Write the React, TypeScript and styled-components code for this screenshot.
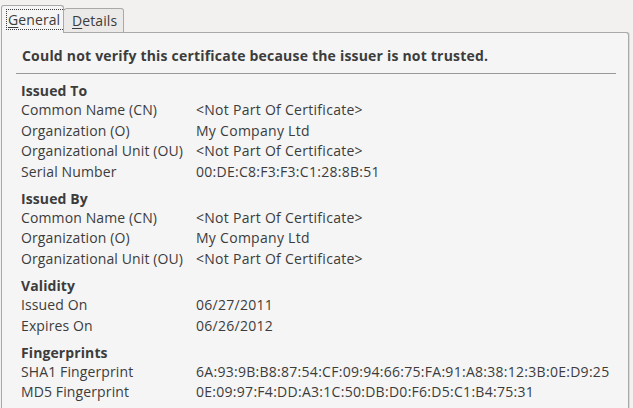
import React from "react";
import styled, { createGlobalStyle } from "styled-components";

const Global = createGlobalStyle`
  html, body { margin: 0; padding: 0; }
  body {
    background: #f2f1f0;
    font-family: "Open Sans", "Noto Sans", sans-serif;
    font-size: 14px;
    color: #3c3c3c;
    width: 633px;
    height: 408px;
    overflow: hidden;
  }
`;

const Window = styled.div`
  display: flex;
  flex-direction: column;
  height: 408px;
  padding: 5px 4px 0 1px;
  box-sizing: border-box;
`;

const TabBar = styled.div`
  display: flex;
  align-items: flex-end;
  position: relative;
  z-index: 1;
  margin-bottom: -1px;
`;

const Tab = styled.div<{ $active?: boolean }>`
  box-sizing: border-box;
  height: ${(p) => (p.$active ? 28 : 25)}px;
  width: ${(p) => (p.$active ? 63 : 60)}px;
  border: 1px solid #a9a9a9;
  border-bottom: ${(p) => (p.$active ? "none" : "1px solid #a9a9a9")};
  border-left: ${(p) => (p.$active ? "1px solid #a9a9a9" : "none")};
  border-radius: 3px 3px 0 0;
  background: ${(p) => (p.$active ? "#f5f5f5" : "#ebeae8")};
  display: flex;
  align-items: flex-start;
  padding: ${(p) => (p.$active ? "3px 0 0 4px" : "1px 0 0 6px")};
  font-size: 14px;
  line-height: 19px;
  letter-spacing: 0.1px;
`;

const FocusLabel = styled.span<{ $focused?: boolean }>`
  display: inline-block;
  padding: 0 4px 0 1px;
  height: 21px;
  box-sizing: border-box;
  line-height: 19px;
  border: 1px dotted ${(p) => (p.$focused ? "#3c3c3c" : "transparent")};
  u {
    text-decoration: underline;
    text-underline-offset: 2px;
  }
`;

const Panel = styled.div`
  flex: 1;
  background: #f5f5f5;
  border: 1px solid #a9a9a9;
  border-bottom: none;
  border-radius: 0 3px 0 0;
  box-shadow: 1px 0 0 #dcdbd9;
  padding: 13px 12px 0 19px;
`;

const Title = styled.div`
  font-weight: 700;
  font-size: 14px;
  line-height: 20px;
  margin-left: 1px;
  letter-spacing: 0.2px;
  white-space: nowrap;
`;

const Separator = styled.hr`
  border: none;
  border-top: 1px solid #999999;
  margin: 7px 0 0 -5px;
  height: 0;
`;

const Section = styled.section`
  margin-top: 7px;
  display: grid;
  grid-template-columns: 175px 1fr;
  line-height: 20.6px;
  & + & {
    margin-top: 6.5px;
  }
`;

const Heading = styled.div`
  grid-column: 1 / -1;
  font-weight: 700;
  line-height: 19px;
  letter-spacing: 0.1px;
`;

const Label = styled.div`
  white-space: nowrap;
  letter-spacing: 0.12px;
`;

const Value = styled.div`
  white-space: nowrap;
  letter-spacing: 0.28px;
`;

type Sec = { title: string; rows: [string, string][] };

const sections: Sec[] = [
  {
    title: "Issued To",
    rows: [
      ["Common Name (CN)", "<Not Part Of Certificate>"],
      ["Organization (O)", "My Company Ltd"],
      ["Organizational Unit (OU)", "<Not Part Of Certificate>"],
      ["Serial Number", "00:DE:C8:F3:F3:C1:28:8B:51"],
    ],
  },
  {
    title: "Issued By",
    rows: [
      ["Common Name (CN)", "<Not Part Of Certificate>"],
      ["Organization (O)", "My Company Ltd"],
      ["Organizational Unit (OU)", "<Not Part Of Certificate>"],
    ],
  },
  {
    title: "Validity",
    rows: [
      ["Issued On", "06/27/2011"],
      ["Expires On", "06/26/2012"],
    ],
  },
  {
    title: "Fingerprints",
    rows: [
      ["SHA1 Fingerprint", "6A:93:9B:B8:87:54:CF:09:94:66:75:FA:91:A8:38:12:3B:0E:D9:25"],
      ["MD5 Fingerprint", "0E:09:97:F4:DD:A3:1C:50:DB:D0:F6:D5:C1:B4:75:31"],
    ],
  },
];

export default function App() {
  return (
    <>
      <Global />
      <Window>
        <TabBar>
          <Tab $active>
            <FocusLabel $focused>
              <u>G</u>eneral
            </FocusLabel>
          </Tab>
          <Tab>
            <FocusLabel>
              <u>D</u>etails
            </FocusLabel>
          </Tab>
        </TabBar>
        <Panel>
          <Title>Could not verify this certificate because the issuer is not trusted.</Title>
          <Separator />
          {sections.map((s) => (
            <Section key={s.title}>
              <Heading>{s.title}</Heading>
              {s.rows.map(([l, v]) => (
                <React.Fragment key={l}>
                  <Label>{l}</Label>
                  <Value>{v}</Value>
                </React.Fragment>
              ))}
            </Section>
          ))}
        </Panel>
      </Window>
    </>
  );
}
